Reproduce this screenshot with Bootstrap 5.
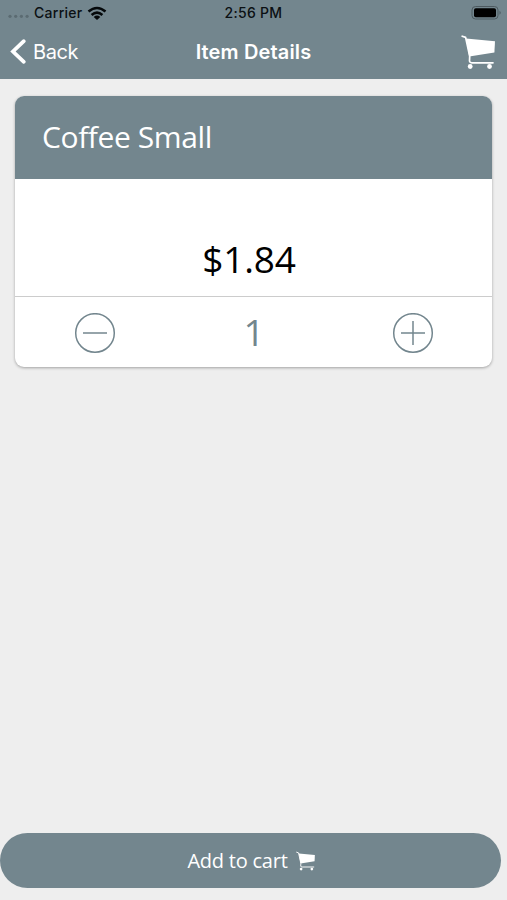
<!DOCTYPE html>
<html lang="en">
<head>
<meta charset="utf-8">
<meta name="viewport" content="width=device-width, initial-scale=1">
<title>Item Details</title>
<link href="https://cdn.jsdelivr.net/npm/bootstrap@5.3.0/dist/css/bootstrap.min.css" rel="stylesheet">
<style>
:root { --slate: #73868e; }
body { background: #eee; font-family: "Open Sans", sans-serif; height: 900px; overflow: hidden; }
svg { display: block; flex: none; }
.app-top { background: var(--slate); height: 79px; font-family: Inter, sans-serif; }
.status-bar, .title-bar { display: grid; grid-template-columns: 1fr auto 1fr; }
.status-bar { height: 26px; font-size: 14px; font-weight: 500; letter-spacing: .28px; color: #0b1013; line-height: 26px; }
.title-bar { height: 53px; line-height: 52px; color: #fff; }
.back-link { height: 52px; font-size: 20px; letter-spacing: -.4px; color: #fff; }
.back-link span { margin-left: 5px; }
.page-title { font-size: 20px; font-weight: 600; letter-spacing: .15px; }
.cart-link { height: 52px; padding-right: 10px; }
.item-card { margin: 17px 15px 0; border-radius: 9px; box-shadow: 0 1px 3px rgba(0,0,0,.32); overflow: hidden; }
.item-head { background: var(--slate); height: 83px; padding: 0 0 2px 27px; font-size: 30px; letter-spacing: -.4px; color: #fff; }
.item-price { height: 118px; padding: 43px 9px 1px 0; font-size: 37px; letter-spacing: -.2px; color: #000; border-bottom: 1px solid #ccc; }
.item-qty { height: 70px; padding-left: 1px; font-size: 37px; color: var(--slate); }
.cart-btn { background: var(--slate); height: 55px; width: 501px; margin-bottom: 12px; font-size: 20px; letter-spacing: -.22px; color: #fff; gap: 8px; padding-left: 8px; }
</style>
</head>
<body class="d-flex flex-column">
<svg width="0" height="0" class="position-absolute" aria-hidden="true">
  <symbol id="cart" viewBox="0 0 36 36">
    <path d="M5 4.5 34 7.3 33.4 18.5 8.2 22.5Z" fill="#fff"/>
    <path d="M1.2 2.2 4.6 3.4 8.7 22.4 8.5 27.2Q8.800 28.800 11 28.800H32" fill="none" stroke="#fff" stroke-width="1.700" stroke-linecap="round" stroke-linejoin="round"/>
    <circle cx="9.200" cy="32.500" r="2.400" fill="#fff"/><circle cx="28.500" cy="32.500" r="2.400" fill="#fff"/>
  </symbol>
</svg>
<header class="app-top">
  <div class="status-bar">
    <div class="d-flex align-items-center ps-2">
      <svg width="22" height="10" viewBox="0 0 22 10" fill="#5b6b72"><circle cx="2" cy="8.300" r="1.600"/><circle cx="7.700" cy="8.300" r="1.600"/><circle cx="13.400" cy="8.300" r="1.600"/><circle cx="19.100" cy="8.300" r="1.600"/></svg>
      <span class="ms-1">Carrier</span>
      <svg class="ms-1" width="20" height="15" viewBox="0 0 20 15" fill="none" stroke="#05090b" stroke-width="2.600"><path d="M1.500 5.500Q10 -1.500 18.500 5.500"/><path d="M4.600 9Q10 4.400 15.400 9"/><path d="M10 14 6.700 10.900Q10 8.200 13.300 10.900Z" fill="#05090b" stroke="none"/></svg>
    </div>
    <div>2:56 PM</div>
    <div class="d-flex align-items-center justify-content-end pe-1">
      <svg width="32" height="16" viewBox="0 0 32 16"><rect x="1" y="1.500" width="26" height="12.500" rx="3.500" fill="none" stroke="#4d5a60"/><rect x="3" y="3.300" width="22" height="9" rx="1.800"/><path d="M28.500 5.800Q31 7.700 28.500 9.700Z" fill="#4d5a60"/></svg>
    </div>
  </div>
  <nav class="title-bar">
    <a href="#" class="back-link d-flex align-items-center text-decoration-none">
      <svg class="ms-2" width="20" height="28" viewBox="0 0 20 28" fill="none" stroke="#fff" stroke-width="3.800" stroke-linecap="round"><path d="M15.800 3.200 5 13.500 15.800 23.800"/></svg>
      <span>Back</span></a>
    <div class="page-title">Item Details</div>
    <div class="cart-link d-flex align-items-center justify-content-end"><svg width="36" height="36"><use href="#cart"/></svg></div>
  </nav>
</header>
<main class="flex-grow-1">
  <section class="item-card bg-white">
    <div class="item-head d-flex align-items-center"><span>Coffee Small</span></div>
    <div class="item-price d-flex align-items-center justify-content-center"><span>$1.84</span></div>
    <div class="item-qty row g-0 align-items-center text-center">
      <div class="col-4 d-flex justify-content-center"><svg class="mt-1" width="42" height="42" viewBox="0 0 42 42" fill="none" stroke="#73868e" stroke-width="1.500"><circle cx="21" cy="20" r="19.300"/><path d="M9 20H33"/></svg></div>
      <div class="col-4"><span>1</span></div>
      <div class="col-4 d-flex justify-content-center"><svg class="mt-1" width="42" height="42" viewBox="0 0 42 42" fill="none" stroke="#73868e" stroke-width="1.500"><circle cx="21" cy="20" r="19.300"/><path d="M9 20H33M21 8V32"/></svg></div>
    </div>
  </section>
</main>
<button class="cart-btn border-0 rounded-pill d-flex align-items-center justify-content-center"><span>Add to cart</span><svg width="20" height="20"><use href="#cart"/></svg></button>
<script src="https://cdn.jsdelivr.net/npm/bootstrap@5.3.0/dist/js/bootstrap.bundle.min.js"></script>
</body>
</html>
